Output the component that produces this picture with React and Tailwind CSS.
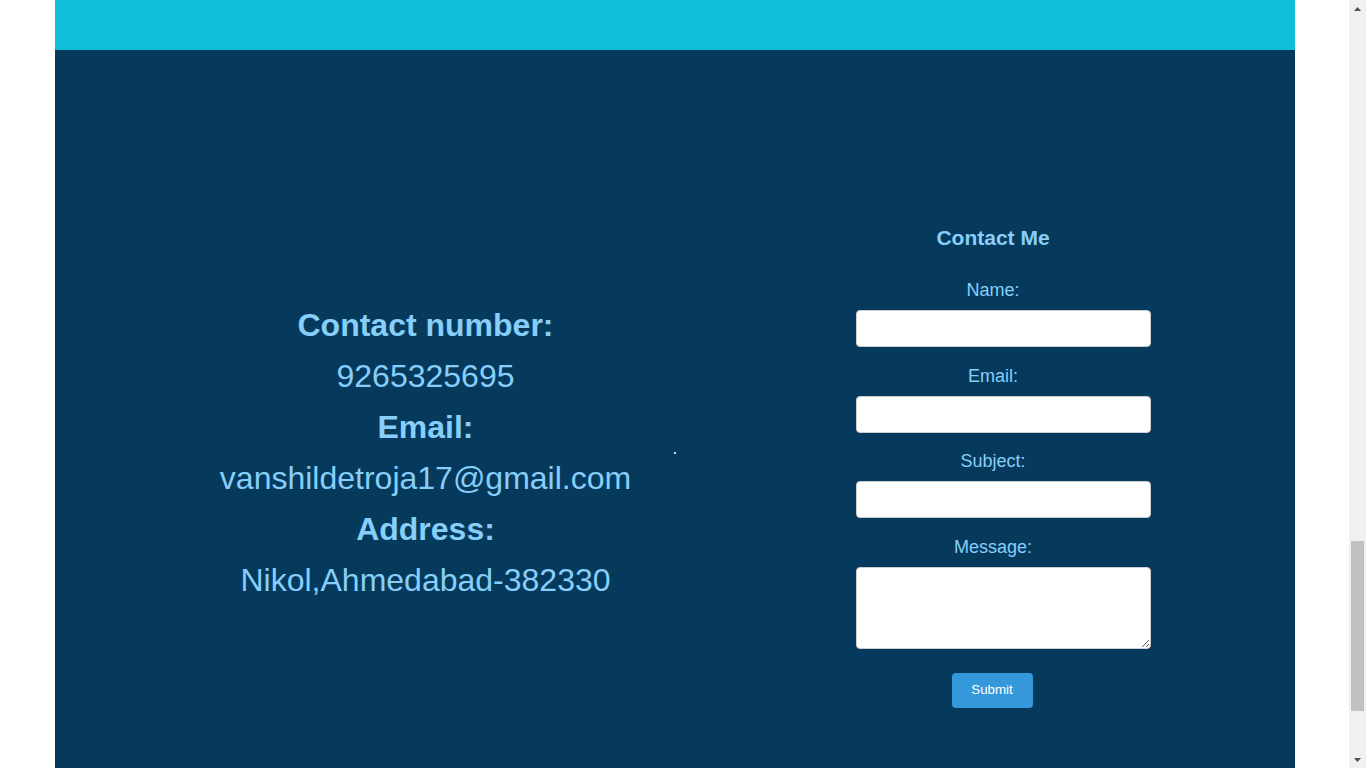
import React from 'react';

const ContactInfo = () => {
  const lines = [
    { text: 'Contact number:', bold: true },
    { text: '9265325695' },
    { text: 'Email:', bold: true },
    { text: 'vanshildetroja17@gmail.com' },
    { text: 'Address:', bold: true },
    { text: 'Nikol,Ahmedabad-382330' },
  ];

  return (
    <div className="w-[620px] pl-[122px] pt-[250px] text-center">
      {lines.map((line, idx) => (
        <p
          key={idx}
          className={`text-[32px] leading-[51px] text-[#87cefa] whitespace-nowrap ${
            line.bold ? 'font-bold' : 'font-normal'
          }`}
        >
          {line.text}
        </p>
      ))}
    </div>
  );
};

const ContactForm = () => {
  const fields = ['Name:', 'Email:', 'Subject:'];

  return (
    <form className="ml-[181px] w-[273px] pt-[176px] text-center" onSubmit={(e) => e.preventDefault()}>
      <h2 className="text-[21px] leading-[24px] font-bold text-[#87cefa] mb-[29px]">Contact Me</h2>

      {fields.map((label) => (
        <div key={label}>
          <label className="block pt-[1px] text-[18px] leading-[21px] text-[#87cefa] mb-[9px]">{label}</label>
          <input
            type="text"
            className="block -ml-[1px] w-[295px] h-[37px] mb-[17.5px] bg-white border border-[#cccccc] rounded-[4px] px-[10px] outline-none"
          />
        </div>
      ))}

      {/* Message */}
      <label className="block pt-[1px] text-[18px] leading-[21px] text-[#87cefa] mb-[9px]">Message:</label>
      <textarea className="block -ml-[1px] w-[295px] h-[82px] bg-white border border-[#cccccc] rounded-[4px] px-[10px] outline-none" />

      <button
        type="submit"
        className="mt-[24px] mx-auto block -translate-x-[1px] w-[81px] h-[35px] bg-[#3498db] text-white text-[13.33px] rounded-[4px]"
      >
        Submit
      </button>
    </form>
  );
};

const FakeScrollbar = () => (
  <div className="w-[17px] h-full bg-[#f0f0f0] flex flex-col items-center">
    <div className="h-[17px] flex items-center justify-center">
      <svg width="7" height="4" viewBox="0 0 7 4">
        <path d="M3.5 0 L7 4 L0 4 Z" fill="#505050" />
      </svg>
    </div>
    <div className="flex-1 w-full flex flex-col">
      <div className="h-[524px]" />
      <div className="mx-[2px] h-[170px] bg-[#c1c1c1]" />
    </div>
    <div className="h-[17px] flex items-center justify-center">
      <svg width="7" height="4" viewBox="0 0 7 4">
        <path d="M0 0 L7 0 L3.5 4 Z" fill="#505050" />
      </svg>
    </div>
  </div>
);

const App = () => {
  return (
    <div
      className="flex h-[768px] w-full overflow-hidden bg-white"
      style={{ fontFamily: '"Liberation Sans", Arial, sans-serif' }}
    >
      <div className="flex-1 h-full">
        <div className="mx-auto w-[1240px] h-full flex flex-col">
          {/* Top band */}
          <div className="h-[50px] bg-[#0fbfd7]" />

          {/* Contact section */}
          <div className="flex-1 bg-[#063a5c] flex items-start">
            <ContactInfo />
            <div className="mt-[402px] -ml-[1px] w-[2px] h-[2px] bg-[#c8d6e0]" />
            <ContactForm />
          </div>
        </div>
      </div>
      <FakeScrollbar />
    </div>
  );
};

export default App;
